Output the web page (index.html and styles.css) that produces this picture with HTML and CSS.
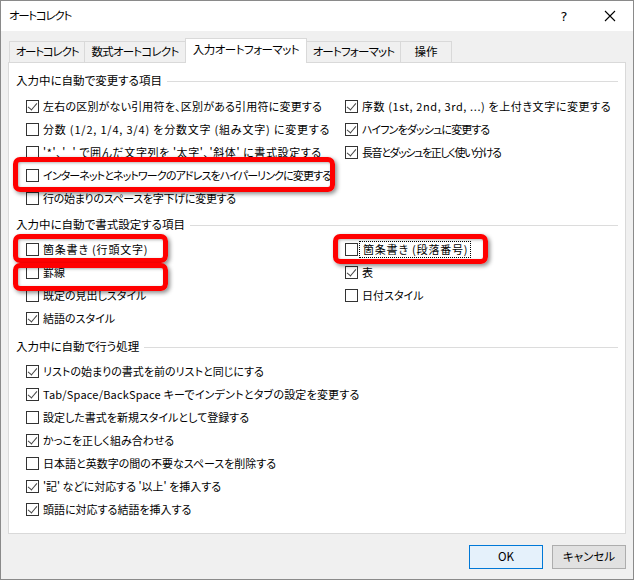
FILE: index.html
```html
<!DOCTYPE html>
<html lang="ja">
<head>
<meta charset="utf-8">
<link rel="stylesheet" href="styles.css">
</head>
<body>
<div class="window">
  <div class="titlebar">
    <span class="title">オートコレクト</span>
    <span class="tb-btn">?</span>
    <span class="tb-btn close"><svg width="12" height="12" viewBox="0 0 12 12"><path d="M1 1L11 11M11 1L1 11" stroke="#000" stroke-width="1.1" fill="none"/></svg></span>
  </div>
  <div class="tabs">
    <div class="tab t1">オートコレクト</div>
    <div class="tab t2">数式オートコレクト</div>
    <div class="tab t3 active">入力オートフォーマット</div>
    <div class="tab t4">オートフォーマット</div>
    <div class="tab t5">操作</div>
  </div>
  <div class="panel">
    <div class="section s1">
      <div class="sec-head"><span>入力中に自動で変更する項目</span><i class="rule"></i></div>
      <div class="grid">
        <div class="col">
          <label class="row ls-p1"><span class="cb on"></span>左右の区別がない引用符を、区別がある引用符に変更する</label>
          <label class="row ls-p3"><span class="cb"></span>分数 (1/2, 1/4, 3/4) を分数文字 (組み文字) に変更する</label>
          <label class="row ls-p2"><span class="cb"></span>'*'、'_' で囲んだ文字列を '太字'、'斜体' に書式設定する</label>
          <label class="row ls-b"><span class="cb"></span>インターネットとネットワークのアドレスをハイパーリンクに変更する</label>
          <label class="row ls-a"><span class="cb"></span>行の始まりのスペースを字下げに変更する</label>
        </div>
        <div class="col">
          <label class="row ls-p2"><span class="cb on"></span>序数 (1st, 2nd, 3rd, ...) を上付き文字に変更する</label>
          <label class="row ls-b"><span class="cb on"></span>ハイフンをダッシュに変更する</label>
          <label class="row ls-c"><span class="cb on"></span>長音とダッシュを正しく使い分ける</label>
        </div>
      </div>
    </div>
    <div class="section s2">
      <div class="sec-head"><span>入力中に自動で書式設定する項目</span><i class="rule"></i></div>
      <div class="grid">
        <div class="col">
          <label class="row ls-p3"><span class="cb"></span>箇条書き (行頭文字)</label>
          <label class="row"><span class="cb"></span>罫線</label>
          <label class="row"><span class="cb"></span>既定の見出しスタイル</label>
          <label class="row"><span class="cb on"></span>結語のスタイル</label>
        </div>
        <div class="col">
          <label class="row ls-p3"><span class="cb"></span><span class="focus">箇条書き (段落番号)</span></label>
          <label class="row"><span class="cb on"></span>表</label>
          <label class="row"><span class="cb"></span>日付スタイル</label>
        </div>
      </div>
    </div>
    <div class="section s3">
      <div class="sec-head"><span>入力中に自動で行う処理</span><i class="rule"></i></div>
      <div class="list">
        <label class="row"><span class="cb on"></span>リストの始まりの書式を前のリストと同じにする</label>
        <label class="row ls-p1"><span class="cb on"></span>Tab/Space/BackSpace キーでインデントとタブの設定を変更する</label>
        <label class="row"><span class="cb"></span>設定した書式を新規スタイルとして登録する</label>
        <label class="row"><span class="cb on"></span>かっこを正しく組み合わせる</label>
        <label class="row"><span class="cb"></span>日本語と英数字の間の不要なスペースを削除する</label>
        <label class="row"><span class="cb on"></span>'記' などに対応する '以上' を挿入する</label>
        <label class="row"><span class="cb on"></span>頭語に対応する結語を挿入する</label>
      </div>
    </div>
  </div>
  <div class="buttons">
    <button class="btn ok">OK</button>
    <button class="btn">キャンセル</button>
  </div>
  <div class="mark m1"></div>
  <div class="mark m2"></div>
  <div class="mark m3"></div>
  <div class="mark m4"></div>
</div>
</body>
</html>
```
FILE: styles.css
```css
* { box-sizing: border-box; }
html, body { margin: 0; padding: 0; background: #fff; }
body {
  font-family: "Noto Sans CJK JP", "Noto Sans", sans-serif;
  font-size: 11px;
  color: #000;
  font-feature-settings: "palt" 1;
}
.window {
  position: relative;
  width: 634px;
  height: 580px;
  border: 1px solid #8a8a8a;
  background: #f0f0f0;
  display: flex;
  flex-direction: column;
  overflow: hidden;
}
.titlebar {
  height: 30px;
  background: #fff;
  display: flex;
  align-items: center;
  padding-left: 8px;
}
.title { flex: 1; line-height: 1; font-size: 11.5px; letter-spacing: -1.3px; }
.tb-btn {
  width: 46px;
  height: 30px;
  display: flex;
  align-items: center;
  justify-content: center;
  font-family: "DejaVu Sans", sans-serif;
  font-size: 13px;
}
.tabs {
  height: 31px;
  padding: 0 0 0 8px;
  display: flex;
  align-items: flex-end;
  position: relative;
  z-index: 2;
}
.tab {
  height: 21px;
  border: 1px solid #d9d9d9;
  border-bottom: none;
  background: #f0f0f0;
  display: flex;
  align-items: center;
  justify-content: center;
  margin-right: -1px;
  line-height: 1;
  padding-bottom: 1px;
  white-space: nowrap;
  font-size: 11.5px;
}
.t1 { width: 76px; letter-spacing: -1.2px; }
.t2 { width: 102px; letter-spacing: -0.8px; }
.t3 { width: 122px; letter-spacing: -0.5px; }
.t4 { width: 95px; letter-spacing: -0.8px; }
.t5 { width: 52px; }
.tab.active {
  height: 25px;
  background: #fff;
  margin-bottom: -1px;
  position: relative;
  z-index: 3;
  padding-bottom: 3px;
}
.panel {
  margin: 0 7px 0 7px;
  height: 472px;
  background: #fff;
  border: 1px solid #d9d9d9;
  padding: 9px 7px 0 7px;
}
.sec-head {
  height: 18px;
  display: flex;
  align-items: center;
  gap: 5px;
  line-height: 1;
  font-size: 11.5px;
}
.rule { flex: 1; height: 1px; background: #dcdcdc; display: block; }
.s1 .sec-head { margin-bottom: 5px; }
.s2 { margin-top: 6px; }
.s2 .sec-head { margin-bottom: 4px; }
.s3 { margin-top: 8px; }
.s3 .sec-head { margin-bottom: 4px; }
.grid {
  display: grid;
  grid-template-columns: 319px 1fr;
  padding-left: 10px;
}
.list { padding-left: 10px; }
.row {
  height: 23px;
  display: flex;
  align-items: center;
  gap: 4px;
  white-space: nowrap;
  line-height: 1;
}
.ls-a { letter-spacing: -0.3px; }
.ls-b { letter-spacing: -0.9px; }
.ls-c { letter-spacing: -1.4px; }
.ls-p1 { letter-spacing: 0.2px; }
.ls-p2 { letter-spacing: 0.6px; }
.ls-p3 { letter-spacing: 0.8px; }
.cb {
  width: 13px;
  height: 13px;
  flex: none;
  border: 1px solid #333;
  background: #fff;
  position: relative;
}
.cb.on::after {
  content: "";
  position: absolute;
  left: 3px;
  top: 0px;
  width: 4px;
  height: 8px;
  border: solid #444;
  border-width: 0 1px 1px 0;
  transform: rotate(40deg);
}
.focus {
  outline: 1px dotted #000;
  outline-offset: 2px;
  padding: 0 0 0 1px;
}
.buttons {
  display: flex;
  justify-content: flex-end;
  gap: 9px;
  padding: 11px 7px 0 0;
}
.btn {
  width: 74px;
  height: 24px;
  font-family: "Noto Sans CJK JP", "Noto Sans", sans-serif;
  font-feature-settings: "palt" 1;
  font-size: 11.5px;
  background: #e1e1e1;
  border: 1px solid #adadad;
  padding: 0;
  color: #000;
  line-height: 1;
}
.btn.ok { background: #e5f1fb; border-color: #0078d7; }
.mark {
  position: absolute;
  border: 5px solid #ff0000;
  border-radius: 7px;
  box-shadow: 2px 2px 4px rgba(0,0,0,0.45), inset 1px 1px 3px rgba(0,0,0,0.3);
  z-index: 10;
}
.m1 { left: 12px; top: 156px; width: 322px; height: 35px; }
.m2 { left: 12px; top: 233px; width: 155px; height: 29px; }
.m3 { left: 12px; top: 262px; width: 155px; height: 28px; }
.m4 { left: 332px; top: 233px; width: 155px; height: 30px; }
```
